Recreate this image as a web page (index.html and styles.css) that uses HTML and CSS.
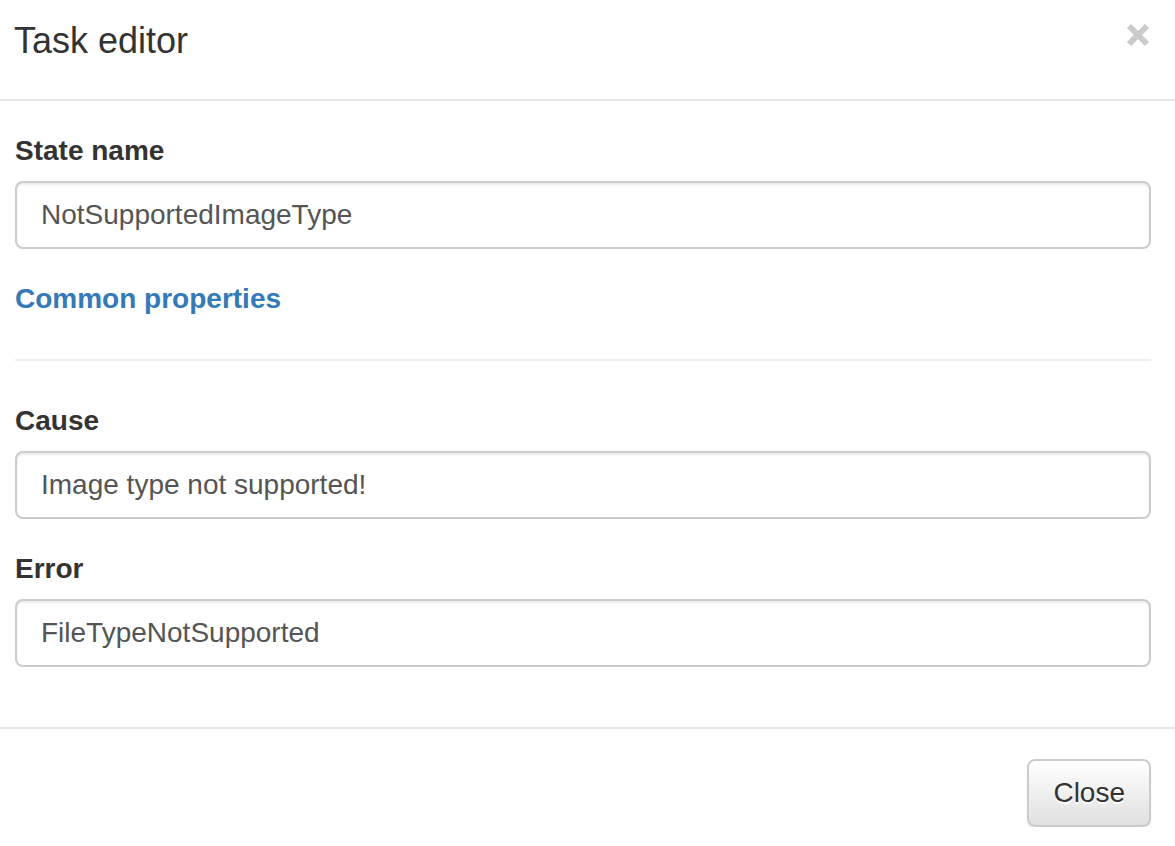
FILE: index.html
```html
<!DOCTYPE html>
<html>
<head>
<meta charset="utf-8">
<title>Task editor</title>
<link rel="stylesheet" href="styles.css">
</head>
<body>
<div class="modal">
  <div class="modal-header">
    <h4 class="modal-title">Task editor</h4>
    <button class="close" type="button" aria-label="Close">
      <svg width="24" height="24" viewBox="0 0 24 24"><path d="M3 3 L21 21 M21 3 L3 21" stroke="#cbcbcb" stroke-width="6" fill="none"/></svg>
    </button>
  </div>
  <div class="modal-body">
    <div class="form-group">
      <label class="label">State name</label>
      <input class="form-control" type="text" value="NotSupportedImageType">
    </div>
    <a class="link" href="#">Common properties</a>
    <hr class="divider">
    <div class="form-group">
      <label class="label">Cause</label>
      <input class="form-control" type="text" value="Image type not supported!">
    </div>
    <div class="form-group">
      <label class="label">Error</label>
      <input class="form-control" type="text" value="FileTypeNotSupported">
    </div>
  </div>
  <div class="modal-footer">
    <button class="btn" type="button">Close</button>
  </div>
</div>
</body>
</html>
```
FILE: styles.css
```css
* { box-sizing: border-box; }
html, body { margin: 0; padding: 0; background: #fff; }
body {
  font-family: "Liberation Sans", Arial, Helvetica, sans-serif;
  font-size: 28px;
  line-height: 40px;
  color: #333;
}
.modal { width: 1175px; }
.modal-header {
  height: 101px;
  padding: 21px 25px 0 14px;
  border-bottom: 2px solid #e5e5e5;
  display: flex;
  justify-content: space-between;
  align-items: flex-start;
}
.modal-title {
  margin: 0;
  font-size: 36px;
  line-height: 40px;
  font-weight: 400;
  color: #333;
}
.close {
  margin: 2px 0 0 0;
  padding: 0;
  border: 0;
  background: transparent;
  width: 24px;
  height: 24px;
  display: block;
  cursor: pointer;
}
.close svg { display: block; }
.modal-body {
  padding: 30px 24px 30px 15px;
}
.form-group {
  margin-bottom: 30px;
}
.label {
  display: block;
  font-weight: 700;
  line-height: 40px;
  margin-bottom: 10px;
  color: #333;
}
.form-control {
  display: block;
  width: 100%;
  height: 68px;
  padding: 12px 24px;
  font-family: "Liberation Sans", Arial, Helvetica, sans-serif;
  font-size: 28px;
  line-height: 40px;
  color: #555;
  background: #fff;
  border: 2px solid #ccc;
  border-radius: 8px;
  box-shadow: inset 0 2px 2px rgba(0,0,0,.075);
  outline: none;
}
.link {
  display: block;
  font-weight: 700;
  color: #337ab7;
  text-decoration: none;
  line-height: 40px;
}
.divider {
  margin: 40px 0;
  border: 0;
  border-top: 2px solid #eee;
  height: 0;
}
.modal-footer {
  border-top: 2px solid #e5e5e5;
  padding: 30px 24px 0 15px;
  display: flex;
  justify-content: flex-end;
}
.btn {
  height: 68px;
  padding: 12px 24px;
  font-family: "Liberation Sans", Arial, Helvetica, sans-serif;
  font-size: 28px;
  line-height: 40px;
  color: #333;
  background: linear-gradient(to bottom, #fff 0, #e0e0e0 100%);
  border: 2px solid #ccc;
  border-radius: 8px;
  text-shadow: 0 2px 0 #fff;
  box-shadow: inset 0 2px 0 rgba(255,255,255,.15), 0 2px 2px rgba(0,0,0,.075);
  cursor: pointer;
}
```
